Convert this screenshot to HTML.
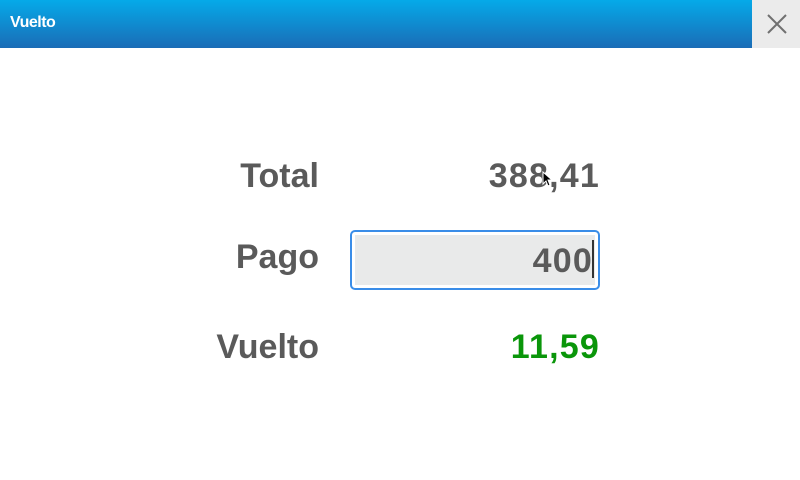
<!DOCTYPE html>
<html><head><style>
body{margin:0;width:800px;height:480px;background:#fff;position:relative;overflow:hidden;font-family:"Liberation Sans",sans-serif;}
.bar{position:absolute;left:0;top:0;width:752px;height:48px;background:linear-gradient(#05aae9,#1a6cb6);}
.bar span{position:absolute;left:10px;top:14px;color:#fff;font-weight:bold;font-size:16px;letter-spacing:-0.5px;}
.close{position:absolute;left:752px;top:0;width:48px;height:48px;background:#ebebeb;}
.t{position:absolute;font-weight:bold;font-size:34px;color:#5a5a5a;letter-spacing:0;line-height:40px;}
.l{right:481px;text-align:right;}
.r{right:200px;text-align:right;letter-spacing:1.2px;}
.box{position:absolute;left:350px;top:230px;width:246px;height:56px;border:2px solid #3a8de8;border-radius:5px;background:#fff;}
.inner{position:absolute;left:3px;top:3px;right:3px;bottom:3px;background:#e9eaea;}
.cur{position:absolute;left:592px;top:240px;width:2px;height:38px;background:#333;}
</style></head><body>
<div class="bar"><span>Vuelto</span></div>
<div class="close"><svg width="48" height="48"><path d="M16 15L34 33M34 15L16 33" stroke="#707070" stroke-width="2"/></svg></div>
<div class="t l" style="top:156px">Total</div>
<div class="t r" style="top:156px">388,41</div>
<div class="t l" style="top:237px">Pago</div>
<div class="box"><div class="inner"></div></div>
<div class="t" style="top:241px;right:207px;letter-spacing:1.2px">400</div>
<div class="cur"></div>
<div class="t l" style="top:327px">Vuelto</div>
<div class="t r" style="top:327px;color:#0a960a">11,59</div>
<svg style="position:absolute;left:542px;top:171px" width="10" height="16"><path d="M1 1L1 13L4 10L6 15L8 14L6 9L10 9Z" fill="#000" stroke="#fff" stroke-width="1"/></svg>
</body></html>
